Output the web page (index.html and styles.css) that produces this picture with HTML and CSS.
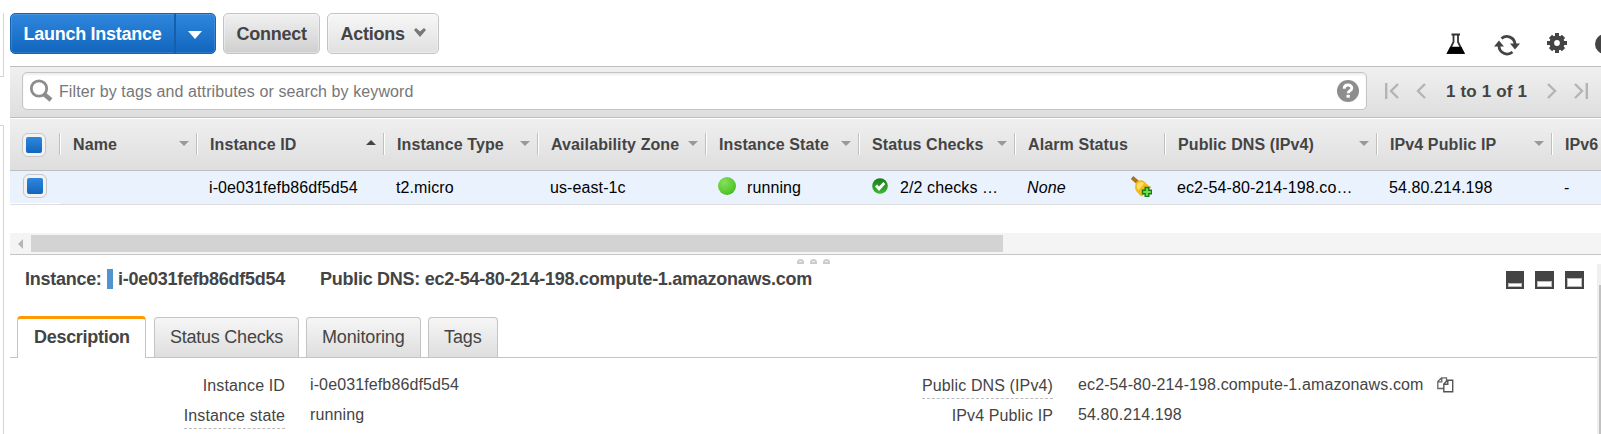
FILE: index.html
```html
<!DOCTYPE html>
<html lang="en">
<head>
<meta charset="utf-8">
<title>Instances</title>
<link rel="stylesheet" href="styles.css">
</head>
<body>
<div class="app">
  <aside class="side"><div class="side-top"></div><div class="side-bottom"></div></aside>
  <main class="main">
    <header class="toolbar">
      <div class="launch"><button class="launch-main"><span>Launch Instance</span></button><button class="launch-drop" aria-label="More"><i class="caret"></i></button></div>
      <button class="btn connect"><span>Connect</span></button>
      <button class="btn actions"><span>Actions</span><svg width="12" height="9" viewBox="0 0 12 9"><path d="M0 2 2 0 6 3.500 10 0 12 2 6 9z" fill="#777"/></svg></button>
      <div class="tools">
        <svg class="flask" width="20" height="22" viewBox="0 0 20 22"><path d="M5.500 1.500h8.500M7.500 2v7L2 20h15.500L12 9V2" fill="none" stroke="#333" stroke-width="1.800"/><path d="M4.300 13.800h10.900l3.800 6.900H.5z" fill="#000"/></svg>
        <svg class="refresh" width="26" height="22" viewBox="0 0 26 22"><path d="M7.500 4.500A8.200 8.200 0 0 1 21 10M18.500 18A8.200 8.200 0 0 1 5 12" fill="none" stroke="#444" stroke-width="2.800"/><path d="M16 9.500h10l-5 6zM0 12.500h10l-5-6z" fill="#444"/></svg>
        <svg class="gear" width="20" height="20" viewBox="0 0 20 20"><g fill="#444"><path d="M8 0h4v20H8zM0 8h20v4H0z"/><path d="M7.700 .8h4.600v18.400H7.700zM.8 7.700h18.400v4.600H.8z" transform="rotate(45 10 10)"/></g><circle cx="10" cy="10" r="5.400" fill="none" stroke="#444" stroke-width="4.400"/><circle cx="10" cy="10" r="2.900" fill="#fff"/></svg>
        <svg class="help-edge" width="6" height="20" viewBox="0 0 6 20"><circle cx="10" cy="10" r="10" fill="#444"/></svg>
      </div>
    </header>
    <section class="filter">
      <div class="search">
        <svg width="24" height="24" viewBox="0 0 24 24"><circle cx="10" cy="9.500" r="7.700" fill="none" stroke="#8d8d8d" stroke-width="2.800"/><path d="M15.500 15.500 22 21" stroke="#8d8d8d" stroke-width="4.400"/></svg>
        <span class="placeholder">Filter by tags and attributes or search by keyword</span>
        <svg class="q" width="22" height="22" viewBox="0 0 22 22"><circle cx="11" cy="11" r="11" fill="#8d8d8d"/><path d="M7.200 8.700C7.200 3.600 15 4 14.800 8.200c-.1 2.700-3.600 2.500-3.600 5" fill="none" stroke="#fff" stroke-width="2.900"/><path d="M9.500 14.800h3.300v2.900H9.500z" fill="#fff"/></svg>
      </div>
      <div class="pager">
        <svg width="14" height="16" viewBox="0 0 14 16"><path d="M1.200 0v16M13 1 6 8l7 7" fill="none" stroke="#b4b4b4" stroke-width="2.400"/></svg>
        <svg width="10" height="16" viewBox="0 0 10 16"><path d="M9 1 2 8l7 7" fill="none" stroke="#b4b4b4" stroke-width="2.400"/></svg>
        <span class="count">1 to 1 of 1</span>
        <svg width="10" height="16" viewBox="0 0 10 16"><path d="m1 1 7 7-7 7" fill="none" stroke="#b4b4b4" stroke-width="2.400"/></svg>
        <svg width="14" height="16" viewBox="0 0 14 16"><path d="M12.800 0v16M1 1l7 7-7 7" fill="none" stroke="#b4b4b4" stroke-width="2.400"/></svg>
      </div>
    </section>
    <section class="grid head">
      <div class="ck"><i class="box"></i></div>
      <div><span>Name</span><i class="dn"></i></div>
      <div><span>Instance ID</span><i class="up"></i></div>
      <div><span>Instance Type</span><i class="dn"></i></div>
      <div><span>Availability Zone</span><i class="dn"></i></div>
      <div><span>Instance State</span><i class="dn"></i></div>
      <div><span>Status Checks</span><i class="dn"></i></div>
      <div><span>Alarm Status</span></div>
      <div><span>Public DNS (IPv4)</span><i class="dn"></i></div>
      <div><span>IPv4 Public IP</span><i class="dn"></i></div>
      <div><span>IPv6</span></div>
    </section>
    <section class="grid row">
      <div class="ck"><i class="box"></i></div>
      <div></div>
      <div><span>i-0e031fefb86df5d54</span></div>
      <div><span>t2.micro</span></div>
      <div><span>us-east-1c</span></div>
      <div><i class="dot"></i><span>running</span></div>
      <div><svg class="ok" width="16" height="16" viewBox="0 0 16 16"><defs><linearGradient id="okg" x2="0" y2="1"><stop stop-color="#1d7a1a"/><stop offset="1" stop-color="#3cb832"/></linearGradient></defs><circle cx="8" cy="8" r="7.800" fill="url(#okg)"/><path d="m4 7.500 3 3.300L12.300 5" fill="none" stroke="#fff" stroke-width="2.800"/></svg><span>2/2 checks …</span></div>
      <div class="alarm"><span class="none">None</span><svg width="21" height="21" viewBox="0 0 21 21"><path d="m1 1.500 7 6" stroke="#a8741c" stroke-width="4"/><path d="M5 7c1-3 6-4 9-1 2 2.500 4 4 6.500 5L11 20.500C9 20 8 18 5.500 15.500 3.500 13 3.800 9.500 5 7z" fill="#f0bb22"/><path d="M6.500 8c2-2.500 5-2 6.500-.5L7.500 14C5.500 12 5.500 10 6.500 8z" fill="#ffe169"/><path d="M14.200 11.500h3.600v2.700h2.700v3.600h-2.700v2.700h-3.600v-2.700h-2.700v-3.600h2.700z" fill="#6fdc4f" stroke="#167d18" stroke-width="1.400"/></svg></div>
      <div><span>ec2-54-80-214-198.co…</span></div>
      <div><span>54.80.214.198</span></div>
      <div><span>-</span></div>
    </section>
    <div class="hscroll"><i class="larrow"></i><i class="thumb"></i></div>
    <section class="detail">
      <div class="dbody">
        <div class="title"><span class="t1">Instance:</span><i class="bar"></i><span class="t2">i-0e031fefb86df5d54</span><span class="t3">Public DNS: ec2-54-80-214-198.compute-1.amazonaws.com</span>
          <div class="panes"><i class="p1"></i><i class="p2"></i><i class="p3"></i></div>
        </div>
        <nav class="tabs"><a class="tab on"><span>Description</span></a><a class="tab s"><span>Status Checks</span></a><a class="tab m"><span>Monitoring</span></a><a class="tab g"><span>Tags</span></a></nav>
        <div class="props">
          <div class="label"><span>Instance ID</span></div><div class="val">i-0e031fefb86df5d54</div>
          <div class="label"><span class="tip">Public DNS (IPv4)</span></div><div class="val">ec2-54-80-214-198.compute-1.amazonaws.com<svg class="copy" width="17" height="16" viewBox="0 0 17 16"><path d="M.8 4.500 4.500.8h5v10.700H.8zM4.800 1v3.800H1" fill="#fff" stroke="#666" stroke-width="1.300"/><path d="M6.800 7l3.700-3.700h5.200v11.500H6.800zM10.800 3.500v3.800H7" fill="#fff" stroke="#555" stroke-width="1.400"/></svg></div>
          <div class="label"><span class="tip">Instance state</span></div><div class="val">running</div>
          <div class="label"><span>IPv4 Public IP</span></div><div class="val">54.80.214.198</div>
        </div>
      </div>
      <div class="vscroll"><i></i></div>
      <div class="grip"><i></i><i></i><i></i></div>
    </section>
  </main>
</div>
</body>
</html>
```
FILE: styles.css
```css
* { box-sizing: border-box; }
body { margin: 0; background: #fff; color: #444; font: 16px "Liberation Sans", Arial, sans-serif; overflow: hidden; }
button { font: inherit; margin: 0; padding: 0; color: inherit; }
svg { display: block; flex: none; }
.app { display: flex; width: 1601px; height: 434px; overflow: hidden; }
.side { width: 10px; padding-top: 13px; flex: none; }
.side-top { width: 4px; height: 64px; border: solid #d5d5d5; border-width: 0 1px 1px 0; }
.side-bottom { width: 4px; height: 320px; margin-top: 48px; border: solid #d5d5d5; border-width: 1px 1px 0 0; }
.main { width: 1591px; flex: none; }
.toolbar { height: 66px; padding-top: 13px; display: flex; font-size: 18px; font-weight: bold; }
.toolbar span { white-space: nowrap; letter-spacing: -.27px; padding-top: 1px; }
.launch { display: flex; width: 206px; height: 41px; border: 1px solid #1563b5; border-radius: 5px; background: linear-gradient(#2f87dd, #1265bd); box-shadow: inset 0 0 0 1px rgba(255,255,255,.13); }
.launch button { border: 0; background: none; color: #fff; height: 39px; }
.launch .launch-main { width: 163px; display: flex; align-items: center; padding-left: 12.5px; }
.launch .launch-drop { flex: 1; border-left: 2px solid #1560ae; display: flex; align-items: center; justify-content: center; }
.caret { border: 7px solid transparent; border-top: 8px solid #fff; border-bottom: 0; margin: 2px 2px 0 0; }
.btn { height: 41px; border: 1px solid #c4c4c4; border-radius: 5px; margin-left: 7px; display: flex; align-items: center; padding-left: 12.5px; box-shadow: inset 0 0 0 1px rgba(255,255,255,.35); }
.connect { width: 97px; background: linear-gradient(#f1f1f1, #cfcfcf); }
.actions { width: 112px; background: linear-gradient(#f7f7f7, #e0e0e0); }
.actions svg { margin: -2px 0 0 9px; }
.tools { display: flex; margin-left: auto; }
.flask { margin: 20px 28px 0 0; }
.refresh { margin: 21px 27px 0 0; }
.gear { margin: 20px 28px 0 0; }
.help-edge { margin-top: 21px; }
.filter { height: 52px; border: solid #bfbfbf; border-width: 1px 0; background: linear-gradient(#f0f0f0, #dedede); display: flex; padding: 5px 0 0 12px; }
.search { width: 1345px; height: 38px; border: 1px solid #c4c4c4; border-radius: 5px; background: #fff; display: flex; align-items: center; padding-left: 6px; box-shadow: inset 0 2px 2px #eee; }
.placeholder { margin-left: 6px; padding-top: 2px; color: #777; font-size: 16px; letter-spacing: .1px; }
.q { margin: -1px 7px 0 auto; }
.pager { display: flex; align-items: center; height: 38px; margin-left: 18px; }
.pager svg:nth-child(2) { margin-left: 17px; }
.count { font-weight: bold; font-size: 17px; width: 81px; margin: 0 20px 0 20px; padding-top: 2px; letter-spacing: .16px; white-space: nowrap; }
.pager svg:nth-child(5) { margin-left: 17px; }
.grid { display: grid; grid-template-columns: 50px 137px 187px 154px 168px 153px 156px 150px 212px 175px 60px; white-space: nowrap; overflow: hidden; letter-spacing: .1px; }
.grid > div { display: flex; align-items: center; }
.head { height: 53px; border-top: 1px solid #fff; border-bottom: 1px solid #bfbfbf; background: linear-gradient(#efefef, #dedede); font-weight: bold; }
.head > div { height: 22px; margin-top: 14px; border-right: 1px solid #bfbfbf; box-shadow: 1px 0 #fff; padding-left: 13px; }
.head span { padding-top: 2px; }
.head .ck { padding: 2px 0 0 12px; }
.box { width: 24px; height: 24px; border: 1px solid #c6c6c6; border-radius: 6px; background: linear-gradient(#2f87dd, #1265bd) content-box, #f2f2f2; padding: 3px; flex: none; }
.dn, .up { margin-left: auto; margin-right: 7px; border: 5px solid transparent; }
.dn { border-top-color: #999; border-bottom: 0; margin-top: -1px; }
.up { border-bottom-color: #444; border-top: 0; margin-top: -4px; }
.row { height: 34px; border-bottom: 1px solid #ddd; background: #eaf2fe; color: #000; }
.row > div { padding-left: 12px; height: 33px; }
.row .ck { padding-left: 13px; padding-bottom: 3px; border-bottom: 1px solid #fff; }
.dot { width: 18px; height: 18px; border-radius: 50%; background: radial-gradient(circle at 35% 30%, #86e05a, #55c92f 60%, #2fa51a); margin: -3px 11px 0 0; }
.ok { margin: -3px 12px 0 1px; }
.alarm svg { margin: -3px 13px 0 auto; }
.none { font-style: italic; }
.hscroll { height: 22px; margin-top: 28px; background: #f4f4f4; border-bottom: 1px solid #c6c6c6; display: flex; align-items: center; }
.larrow { border: 5px solid transparent; border-right-color: #b5b5b5; border-left: 0; margin: 0 8px; }
.thumb { width: 972px; height: 17px; background: #d3d3d3; }
.detail { display: flex; position: relative; height: 179px; }
.dbody { width: 1587px; }
.vscroll { width: 4px; margin-top: 9px; background: #f0f0f0; padding: 21px 0 0 2px; }
.vscroll i { display: block; height: 149px; background: #c1c1c1; }
.grip { position: absolute; left: 787px; top: 4px; display: flex; gap: 6px; }
.grip i { width: 7px; height: 5px; border: 2px solid #ccc; border-radius: 4px 4px 0 0; }
.title { height: 61px; padding: 14px 13px 0 15px; font-size: 18px; font-weight: bold; display: flex; white-space: nowrap; line-height: 20px; letter-spacing: -.27px; }
.t1 { width: 82px; }
.bar { width: 6px; height: 20px; background: #5294cf; }
.t2 { width: 202px; padding-left: 5px; }
.t3 { padding-left: 5px; }
.panes { margin-left: auto; display: flex; gap: 11px; padding-top: 2px; }
.panes i { width: 19px; height: 18px; border: 2px solid #444; background: #fff; box-shadow: inset 0 0 0 1px #bbb; }
.panes .p1 { width: 18px; border-top-width: 12px; }
.panes .p2 { border-top-width: 10px; }
.panes .p3 { border-top-width: 7px; }
.tabs { height: 42px; border-bottom: 1px solid #c4c4c4; padding-left: 7px; display: flex; align-items: flex-end; font-size: 18px; }
.tab { height: 40px; border: 1px solid #c4c4c4; border-bottom: 0; border-radius: 4px 4px 0 0; background: linear-gradient(#f6f6f6, #dedede); padding: 9px 0 0 15px; margin-left: 7px; white-space: nowrap; }
.tab.on { width: 129px; height: 42px; margin: 0 1px -1px 0; background: #fff; border-top: 3px solid #f90; font-weight: bold; padding: 8px 0 0 16px; letter-spacing: -.29px; }
.s { width: 145px; letter-spacing: -.24px; }
.m { width: 115px; letter-spacing: -.15px; }
.g { width: 70px; letter-spacing: -.1px; }
.props { display: grid; grid-template-columns: 275px 493px 275px 1fr; grid-auto-rows: 30px; padding-top: 17px; letter-spacing: .12px; }
.label { text-align: right; padding-top: 1px; }
.label span { display: inline-block; height: 23px; line-height: 20px; }
.tip { border-bottom: 1px dashed #bbb; }
.val { padding-left: 25px; line-height: 20px; display: flex; }
.copy { margin: 2px 0 0 13px; }
```
